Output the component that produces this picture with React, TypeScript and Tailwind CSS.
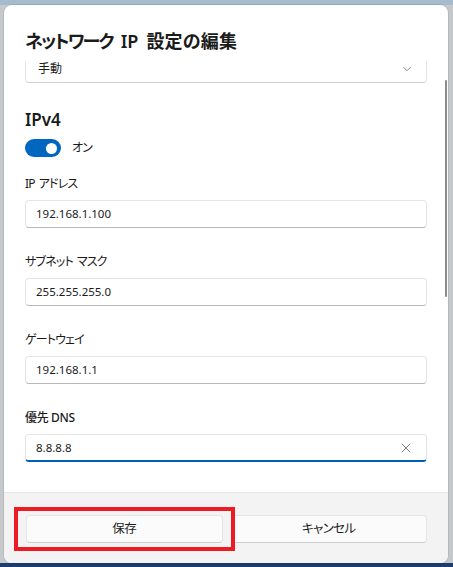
import { ChevronDown, X } from "lucide-react";

const font = "font-['Noto_Sans','Noto_Sans_CJK_JP',sans-serif] [font-feature-settings:'palt']";

const fields = [
  { label: "IP", rest: "アドレス", value: "192.168.1.100" },
  { label: "サブネット", rest: "マスク", value: "255.255.255.0" },
  { label: "ゲートウェイ", rest: "", value: "192.168.1.1" },
];

function Field({ label, rest, value }: { label: string; rest: string; value: string }) {
  return (
    <div className="flex flex-col gap-[6px]">
      <label className="text-[12px] leading-5 tracking-[-0.07em] text-[#1b1b1b]">
        {label}
        {rest ? <span className="ml-[4px]">{rest}</span> : null}
      </label>
      <div className="flex h-7 items-center rounded-[4px] border border-[#e5e5e5] border-b-[#b8b8b8] bg-white px-[10px] text-[11.5px] text-[#1b1b1b]">
        {value}
      </div>
    </div>
  );
}

export default function App() {
  return (
    <div
      className={`flex h-[567px] w-[453px] border-t-[5px] border-b-[4px] border-t-[#a6bbce] border-b-[#1d3c6e] bg-[#c6c9cc] pl-[4px] pr-[5px] ${font}`}
    >
      <div className="flex flex-1 flex-col overflow-hidden rounded-lg bg-white shadow-[0_0_0_1px_rgba(0,0,0,0.08)]">
        <div className="h-[56px] shrink-0 px-[21px] pt-6">
          <h1 className="flex items-baseline text-[18px] font-semibold leading-6 text-[#1b1b1b]">
            <span className="tracking-[-0.1em]">ネットワーク</span>
            <span className="ml-[8px]">IP</span>
            <span className="ml-[8px] tracking-[0.01em]">設定の編集</span>
          </h1>
        </div>

        <div className="relative flex-1 overflow-hidden">
          <div className="-mt-[6px] flex flex-col px-[21px]">
            <div className="flex h-7 items-center justify-between rounded-[4px] border border-[#e5e5e5] border-b-[#d0d0d0] bg-white pl-3 pr-[12px] text-[12px] text-[#1b1b1b]">
              <span>手動</span>
              <ChevronDown size={14} strokeWidth={1.5} className="text-[#777]" />
            </div>

            <h2 className="mt-[25px] text-[17px] font-semibold leading-6 text-[#1b1b1b]">IPv4</h2>

            <div className="mt-[7px] flex items-center gap-[11px]">
              <div className="flex h-[18px] w-[36px] items-center justify-end rounded-full bg-[#0067c0] pr-[4px]">
                <div className="h-[11px] w-[11px] rounded-full bg-white" />
              </div>
              <span className="text-[12px] tracking-[-0.07em] text-[#1b1b1b]">オン</span>
            </div>

            <div className="mt-[17px] flex flex-col gap-6">
              {fields.map((f) => (
                <Field key={f.label} label={f.label} rest={f.rest} value={f.value} />
              ))}
              <div className="flex flex-col gap-[6px]">
                <label className="text-[12px] font-medium leading-5 tracking-[-0.03em] text-[#1b1b1b]">
                  優先 DNS
                </label>
                <div className="flex h-7 items-center justify-between rounded-[4px] border border-[#e5e5e5] border-b-2 border-b-[#005fb8] bg-white pl-[10px] pr-[12px] text-[11.5px] text-[#1b1b1b]">
                  <span>8.8.8.8</span>
                  <X size={16} strokeWidth={1.25} className="text-[#666]" />
                </div>
              </div>
            </div>
          </div>
          {/* scrollbar */}
          <div className="absolute right-[1.5px] top-[19px] h-[217px] w-[2px] rounded-full bg-[#8a8a8a]" />
        </div>

        <div className="relative flex h-[71px] shrink-0 gap-2 border-t border-[#e5e5e5] bg-[#f3f3f3] pl-[22px] pr-[21px] pt-[22px]">
          <button className="flex h-7 flex-1 items-center justify-center rounded-[4px] border border-[#e5e5e5] border-b-[#cfcfcf] bg-[#fbfbfb] text-[12.5px] tracking-[-0.05em] text-[#1b1b1b]">
            保存
          </button>
          <button className="flex h-7 flex-1 items-center justify-center rounded-[4px] border border-[#e5e5e5] border-b-[#cfcfcf] bg-[#fbfbfb] text-[12.5px] tracking-[-0.05em] text-[#1b1b1b]">
            キャンセル
          </button>
          {/* annotation */}
          <div className="absolute left-[10px] top-[14px] h-[44px] w-[221px] border-[4px] border-[#ed1c24]" />
        </div>
      </div>
    </div>
  );
}
